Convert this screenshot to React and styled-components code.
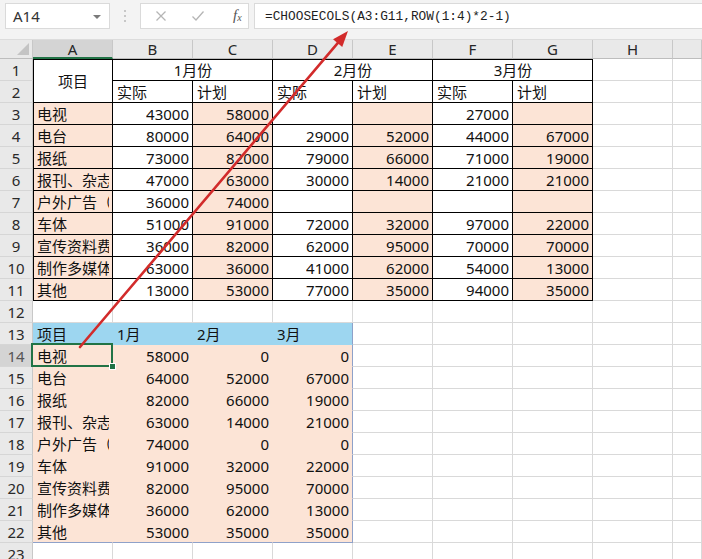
import React from 'react';
import styled, { createGlobalStyle } from 'styled-components';

const PINK = '#fce4d6';
const BLUE = '#9dd6f0';
const GRID = '#d9d9d9';
const INK = '#000';
const FRAME = '#8ea1c9';
const GREEN = '#217346';

const Global = createGlobalStyle`
  html, body { margin: 0; padding: 0; background: #fff; overflow: hidden; }
  body { font-family: "Noto Sans", "Noto Sans CJK SC", sans-serif; }
`;

const Window = styled.div`
  position: relative;
  width: 702px;
  height: 559px;
  overflow: hidden;
  background: #fff;
`;

/* ---------- formula bar ---------- */
const FormulaBar = styled.div`
  box-sizing: border-box;
  height: 40px;
  background: #f3f3f3;
  display: flex;
  align-items: flex-start;
  padding: 3px 0 0 5px;
  border-bottom: 1px solid #dcdcdc;
`;

const NameBox = styled.div`
  box-sizing: border-box;
  position: relative;
  width: 105px;
  height: 26px;
  background: #fff;
  border: 1px solid #dadada;
  display: flex;
  align-items: center;
  padding-left: 7px;
  font-size: 15px;
  color: #333;
  &::after {
    content: '';
    position: absolute;
    right: 8px;
    top: 11px;
    border-style: solid;
    border-width: 4px 4px 0 4px;
    border-color: #7a7a7a transparent transparent transparent;
  }
`;

const Grip = styled.div`
  width: 30px;
  height: 26px;
  display: flex;
  flex-direction: column;
  align-items: center;
  justify-content: center;
  gap: 3px;
  span {
    width: 2px;
    height: 2px;
    background: #b8b8b8;
    border-radius: 1px;
  }
`;

const ActionBox = styled.div`
  box-sizing: border-box;
  width: 109px;
  height: 26px;
  background: #fff;
  border: 1px solid #dadada;
  display: flex;
  align-items: center;
  padding-left: 14px;
  gap: 24px;
`;

const Fx = styled.span`
  font-family: "Liberation Serif", serif;
  font-style: italic;
  font-size: 15px;
  line-height: 20px;
  color: #555;
  margin-left: 4px;
  sub {
    font-size: 10px;
    vertical-align: 0;
    position: relative;
    top: 1px;
  }
`;

const FormulaInput = styled.div`
  box-sizing: border-box;
  flex: 1;
  height: 26px;
  margin-left: 5px;
  background: #fff;
  border: 1px solid #dadada;
  border-right: none;
  display: flex;
  align-items: center;
  padding-left: 10px;
  font-family: "Liberation Mono", monospace;
  font-size: 12.8px;
  color: #1e1e1e;
  white-space: nowrap;
`;

/* ---------- sheet grid ---------- */
const Sheet = styled.div`
  display: grid;
  grid-template-columns: 33px repeat(8, 80px) 1fr;
  grid-template-rows: 19px;
  grid-auto-rows: 22px;
`;

const Corner = styled.div`
  box-sizing: border-box;
  position: relative;
  background: #e9e9e9;
  border-right: 1px solid #c8c8c8;
  border-bottom: 1px solid #bdbdbd;
  &::after {
    content: '';
    position: absolute;
    right: 3px;
    bottom: 3px;
    border-style: solid;
    border-width: 0 0 12px 12px;
    border-color: transparent transparent #c4c4c4 transparent;
  }
`;

const ColHead = styled.div`
  box-sizing: border-box;
  display: flex;
  align-items: center;
  justify-content: center;
  background: ${(p) => (p.$active ? '#d4d4d4' : '#e9e9e9')};
  border-right: 1px solid #c8c8c8;
  border-bottom: ${(p) => (p.$active ? `2px solid ${GREEN}` : '1px solid #bdbdbd')};
  font-size: 15px;
  line-height: 18px;
  color: #262626;
`;

const RowHead = styled.div`
  box-sizing: border-box;
  display: flex;
  align-items: center;
  justify-content: center;
  background: ${(p) => (p.$active ? '#d4d4d4' : '#e9e9e9')};
  border-right: 1px solid #c8c8c8;
  border-bottom: 1px solid #d6d6d6;
  font-size: 15px;
  line-height: 20px;
  color: ${(p) => (p.$active ? '#555' : '#2a2a2a')};
`;

const alignMap = { l: 'flex-start', r: 'flex-end', c: 'center' };

const Cell = styled.div`
  box-sizing: border-box;
  position: relative;
  min-width: 0;
  grid-column: span ${(p) => p.$cs || 1};
  grid-row: span ${(p) => p.$rs || 1};
  display: flex;
  align-items: center;
  justify-content: ${(p) => alignMap[p.$al || 'l']};
  padding: 0 3px 0 4px;
  background: ${(p) => p.$bg || '#fff'};
  border-right: 1px solid ${(p) => p.$rc || GRID};
  border-bottom: 1px solid ${(p) => p.$bc || GRID};
  box-shadow: ${(p) =>
    [p.$top && `inset 0 1px 0 ${INK}`, p.$left && `inset 1px 0 0 ${INK}`].filter(Boolean).join(', ') ||
    'none'};
  font-size: 15px;
  color: #111;
`;

const CellText = styled.span`
  display: block;
  max-width: 100%;
  overflow: hidden;
  white-space: nowrap;
  line-height: 20px;
`;

const Selection = styled.div`
  position: absolute;
  left: -2px;
  top: -2px;
  right: -1px;
  bottom: -1px;
  border: 2px solid ${GREEN};
  z-index: 2;
  pointer-events: none;
  &::after {
    content: '';
    position: absolute;
    right: -5px;
    bottom: -5px;
    width: 5px;
    height: 5px;
    background: ${GREEN};
    border: 1px solid #fff;
  }
`;

const ArrowLayer = styled.svg`
  position: absolute;
  left: 0;
  top: 0;
  z-index: 3;
  pointer-events: none;
`;

/* ---------- data ---------- */
const budget = [
  ['电视', 43000, 58000, null, null, 27000, null],
  ['电台', 80000, 64000, 29000, 52000, 44000, 67000],
  ['报纸', 73000, 82000, 79000, 66000, 71000, 19000],
  ['报刊、杂志', 47000, 63000, 30000, 14000, 21000, 21000],
  ['户外广告（路牌）', 36000, 74000, null, null, null, null],
  ['车体', 51000, 91000, 72000, 32000, 97000, 22000],
  ['宣传资料费', 36000, 82000, 62000, 95000, 70000, 70000],
  ['制作多媒体', 63000, 36000, 41000, 62000, 54000, 13000],
  ['其他', 13000, 53000, 77000, 35000, 94000, 35000],
];

const picked = [
  ['电视', 58000, 0, 0],
  ['电台', 64000, 52000, 67000],
  ['报纸', 82000, 66000, 19000],
  ['报刊、杂志', 63000, 14000, 21000],
  ['户外广告（路牌）', 74000, 0, 0],
  ['车体', 91000, 32000, 22000],
  ['宣传资料费', 82000, 95000, 70000],
  ['制作多媒体', 36000, 62000, 13000],
  ['其他', 53000, 35000, 35000],
];

const cols = ['A', 'B', 'C', 'D', 'E', 'F', 'G', 'H', ''];

const Blank = ({ n }) =>
  Array.from({ length: n }, (_, i) => <Cell key={`b${i}`} />);

function SheetBody() {
  const rows = [];

  // rows 1–2: merged month headings
  rows.push(
    <React.Fragment key="r1">
      <RowHead>1</RowHead>
      <Cell $rs={2} $al="c" $rc={INK} $bc={INK} $top $left>
        <CellText>项目</CellText>
      </Cell>
      {['1月份', '2月份', '3月份'].map((m) => (
        <Cell key={m} $cs={2} $al="c" $rc={INK} $bc={INK} $top>
          <CellText>{m}</CellText>
        </Cell>
      ))}
      <Blank n={2} />
    </React.Fragment>
  );
  rows.push(
    <React.Fragment key="r2">
      <RowHead>2</RowHead>
      {['实际', '计划', '实际', '计划', '实际', '计划'].map((t, i) => (
        <Cell key={i} $rc={INK} $bc={INK}>
          <CellText>{t}</CellText>
        </Cell>
      ))}
      <Blank n={2} />
    </React.Fragment>
  );

  // rows 3–11: monthly budget
  budget.forEach((r, ri) => {
    rows.push(
      <React.Fragment key={`t${ri}`}>
        <RowHead>{ri + 3}</RowHead>
        {r.map((v, ci) => (
          <Cell
            key={ci}
            $al={ci === 0 ? 'l' : 'r'}
            $bg={ci % 2 === 0 ? PINK : '#fff'}
            $rc={INK}
            $bc={INK}
            $left={ci === 0}
          >
            <CellText>{v}</CellText>
          </Cell>
        ))}
        <Blank n={2} />
      </React.Fragment>
    );
  });

  // row 12: empty
  rows.push(
    <React.Fragment key="r12">
      <RowHead>12</RowHead>
      <Blank n={9} />
    </React.Fragment>
  );

  // row 13: result heading
  rows.push(
    <React.Fragment key="r13">
      <RowHead>13</RowHead>
      {['项目', '1月', '2月', '3月'].map((t, i) => (
        <Cell key={t} $bg={BLUE} $rc={i === 3 ? FRAME : BLUE} $bc={BLUE}>
          <CellText>{t}</CellText>
        </Cell>
      ))}
      <Blank n={5} />
    </React.Fragment>
  );

  // rows 14–22: result rows
  picked.forEach((r, ri) => {
    const last = ri === picked.length - 1;
    rows.push(
      <React.Fragment key={`p${ri}`}>
        <RowHead $active={ri === 0}>{ri + 14}</RowHead>
        {r.map((v, ci) => (
          <Cell
            key={ci}
            $al={ci === 0 ? 'l' : 'r'}
            $bg={PINK}
            $rc={ci === 3 ? FRAME : PINK}
            $bc={last ? FRAME : PINK}
          >
            <CellText>{v}</CellText>
            {ri === 0 && ci === 0 && <Selection />}
          </Cell>
        ))}
        <Blank n={5} />
      </React.Fragment>
    );
  });

  rows.push(
    <React.Fragment key="r23">
      <RowHead>23</RowHead>
      <Blank n={9} />
    </React.Fragment>
  );

  return rows;
}

function XIcon() {
  return (
    <svg width="12" height="12" viewBox="0 0 12 12">
      <path d="M1.5 1.5 L10.5 10.5 M10.5 1.5 L1.5 10.5" stroke="#b5b5b5" strokeWidth="1.3" fill="none" />
    </svg>
  );
}

function CheckIcon() {
  return (
    <svg width="14" height="12" viewBox="0 0 14 12">
      <path d="M1.5 6.5 L5 10 L12.5 1.5" stroke="#b5b5b5" strokeWidth="1.3" fill="none" />
    </svg>
  );
}

export default function App() {
  // pointer from the picked block up to the formula
  const tip = [348, 31];
  const from = [80, 347];
  const dx = tip[0] - from[0];
  const dy = tip[1] - from[1];
  const len = Math.hypot(dx, dy);
  const ux = dx / len;
  const uy = dy / len;
  const head = 16;
  const half = 6;
  const bx = tip[0] - ux * head;
  const by = tip[1] - uy * head;
  const p1 = [bx - uy * half, by + ux * half];
  const p2 = [bx + uy * half, by - ux * half];

  return (
    <Window>
      <Global />
      <FormulaBar>
        <NameBox>A14</NameBox>
        <Grip>
          <span />
          <span />
          <span />
        </Grip>
        <ActionBox>
          <XIcon />
          <CheckIcon />
          <Fx>
            f<sub>x</sub>
          </Fx>
        </ActionBox>
        <FormulaInput>=CHOOSECOLS(A3:G11,ROW(1:4)*2-1)</FormulaInput>
      </FormulaBar>
      <Sheet>
        <Corner />
        {cols.map((c, i) => (
          <ColHead key={i} $active={c === 'A'}>
            {c}
          </ColHead>
        ))}
        <SheetBody />
      </Sheet>
      <ArrowLayer width="702" height="559" viewBox="0 0 702 559">
        <line
          x1={from[0]}
          y1={from[1]}
          x2={bx + ux * 2}
          y2={by + uy * 2}
          stroke="#d22b2b"
          strokeWidth="2.6"
          strokeLinecap="round"
        />
        <polygon
          points={`${tip[0]},${tip[1]} ${p1[0]},${p1[1]} ${p2[0]},${p2[1]}`}
          fill="#d22b2b"
        />
      </ArrowLayer>
    </Window>
  );
}
